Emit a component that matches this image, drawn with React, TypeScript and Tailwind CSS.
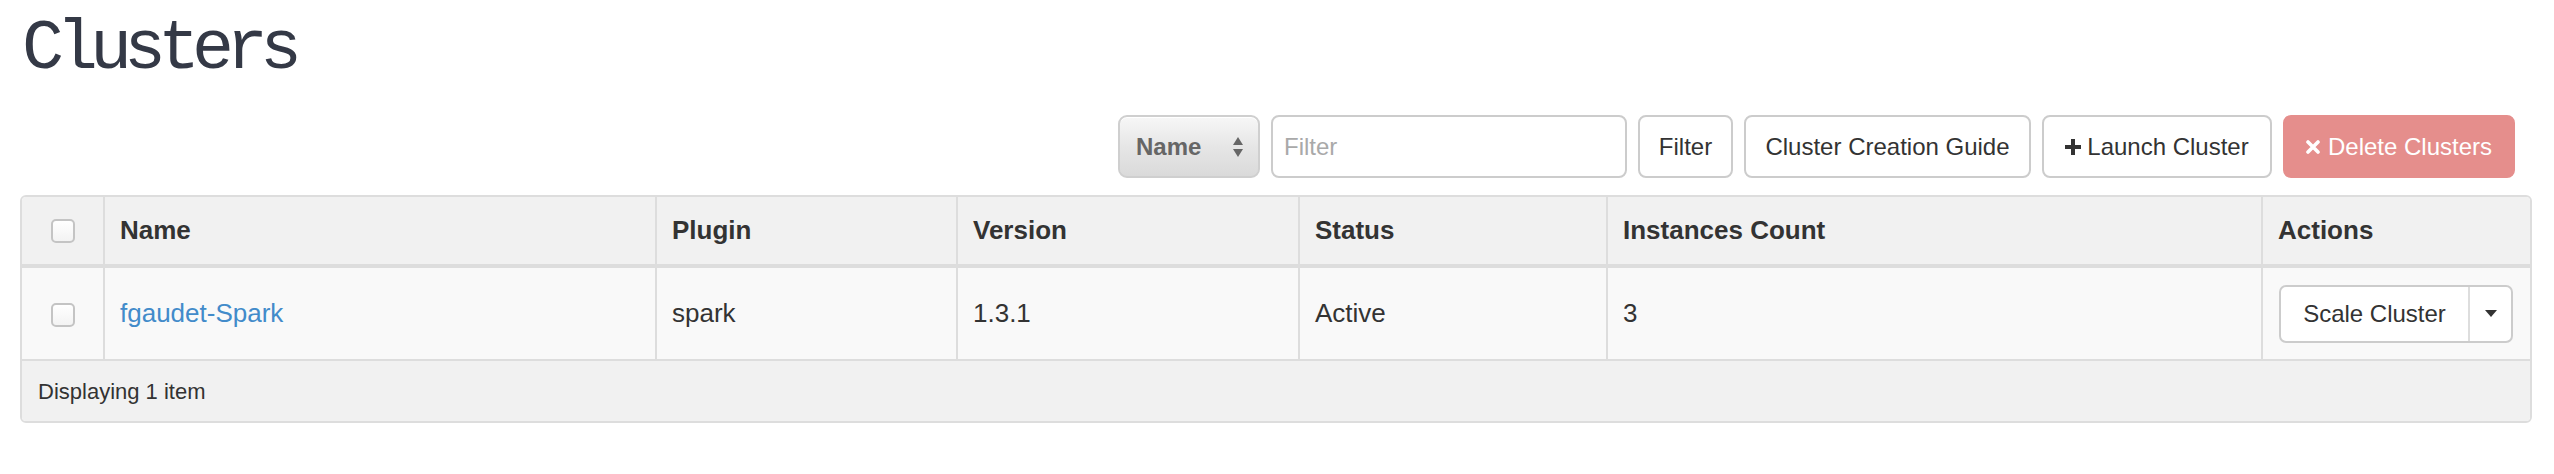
import React from 'react'

const cols = 'grid grid-cols-[81px_552px_301px_342px_308px_655px_1fr]'

function Checkbox() {
  return (
    <span className="block h-[24px] w-[24px] rounded-[5px] border-2 border-[#c4c4c4] bg-gradient-to-b from-white to-[#f3f3f3]" />
  )
}

function PlusIcon() {
  return (
    <svg width="16" height="16" viewBox="0 0 16 16" className="mr-[6px]">
      <path d="M6 0h4v6h6v4h-6v6H6v-6H0V6h6z" fill="#333" />
    </svg>
  )
}

function RemoveIcon() {
  return (
    <svg width="14" height="14" viewBox="0 0 14 14" className="mr-[8px]">
      <path d="M2 2l10 10M12 2L2 12" stroke="#fff" strokeWidth="3.6" strokeLinecap="round" />
    </svg>
  )
}

export default function App() {
  const font = { fontFamily: '"Liberation Sans", Arial, sans-serif' }

  return (
    <div className="min-h-[474px] bg-white pl-[20px] pr-[22px] text-[#333]" style={font}>
      <h1 className="mt-[15px] ml-[2px] text-[70px] font-normal leading-none tracking-[-8px] text-[#343946] [font-family:'Liberation_Mono',monospace]">
        Clusters
      </h1>

      {/* toolbar */}
      <div className="mt-[30px] flex items-center justify-end gap-[11px] pr-[17px]">
        <div className="flex h-[63px] w-[142px] items-center justify-between rounded-[9px] border-2 border-[#cfcfcf] bg-gradient-to-b from-[#f7f7f7] via-[#e6e6e6] to-[#dadada] pl-[16px] pr-[14px] shadow-[inset_0_1px_0_#fff]">
          <span className="text-[24px] font-bold text-[#666]">Name</span>
          <svg width="12" height="22" viewBox="0 0 12 22">
            <path d="M6 1l5 8H1z" fill="#666" />
            <path d="M6 21l5-8H1z" fill="#666" />
          </svg>
        </div>
        <div className="flex h-[63px] w-[356px] items-center rounded-[8px] border-2 border-[#cccccc] bg-white pl-[11px]">
          <span className="text-[24px] text-[#a9a9a9]">Filter</span>
        </div>
        <button className="h-[63px] w-[95px] rounded-[8px] border-2 border-[#cccccc] bg-white text-[24px] text-[#333]">
          Filter
        </button>
        <button className="h-[63px] w-[287px] rounded-[8px] border-2 border-[#cccccc] bg-white text-[24px] text-[#333]">
          Cluster Creation Guide
        </button>
        <button className="flex h-[63px] w-[230px] items-center justify-center rounded-[8px] border-2 border-[#cccccc] bg-white text-[24px] text-[#333]">
          <PlusIcon />
          Launch Cluster
        </button>
        <button className="flex h-[63px] w-[232px] items-center justify-center rounded-[8px] border-2 border-[#e58e8c] bg-[#e58e8c] text-[24px] text-white">
          <RemoveIcon />
          Delete Clusters
        </button>
      </div>

      {/* table */}
      <div className="mt-[17px] overflow-hidden rounded-[6px] border-2 border-[#dddddd]">
        <div className={`${cols} h-[71px] border-b-4 border-[#dddddd] bg-[#f1f1f1] text-[26px] font-bold`}>
          <div className="flex items-center justify-center">
            <Checkbox />
          </div>
          <div className="flex items-center border-l-2 border-[#dddddd] pl-[15px]">Name</div>
          <div className="flex items-center border-l-2 border-[#dddddd] pl-[15px]">Plugin</div>
          <div className="flex items-center border-l-2 border-[#dddddd] pl-[15px]">Version</div>
          <div className="flex items-center border-l-2 border-[#dddddd] pl-[15px]">Status</div>
          <div className="flex items-center border-l-2 border-[#dddddd] pl-[15px]">Instances Count</div>
          <div className="flex items-center border-l-2 border-[#dddddd] pl-[15px]">Actions</div>
        </div>

        <div className={`${cols} h-[93px] border-b-2 border-[#dddddd] bg-[#f9f9f9] text-[26px]`}>
          <div className="flex items-center justify-center pt-[2px]">
            <Checkbox />
          </div>
          <div className="flex items-center border-l-2 border-[#dddddd] pl-[15px] text-[#428bca]">fgaudet-Spark</div>
          <div className="flex items-center border-l-2 border-[#dddddd] pl-[15px]">spark</div>
          <div className="flex items-center border-l-2 border-[#dddddd] pl-[15px]">1.3.1</div>
          <div className="flex items-center border-l-2 border-[#dddddd] pl-[15px]">Active</div>
          <div className="flex items-center border-l-2 border-[#dddddd] pl-[15px]">3</div>
          <div className="flex items-center border-l-2 border-[#dddddd] pl-[16px]">
            <div className="flex h-[58px] w-[234px] rounded-[7px] border-2 border-[#cccccc] bg-white text-[24px]">
              <span className="flex flex-1 items-center justify-center">Scale Cluster</span>
              <span className="flex w-[43px] items-center justify-center border-l-2 border-[#dddddd]">
                <svg width="12" height="8" viewBox="0 0 12 8">
                  <path d="M0 0h12L6 7z" fill="#333" />
                </svg>
              </span>
            </div>
          </div>
        </div>

        <div className="flex h-[60px] items-center bg-[#f1f1f1] pl-[16px] text-[22px]">Displaying 1 item</div>
      </div>
    </div>
  )
}
